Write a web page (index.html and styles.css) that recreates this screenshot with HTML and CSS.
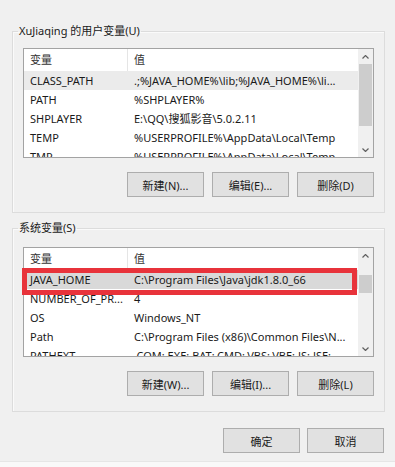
FILE: index.html
```html
<!DOCTYPE html>
<html>

<head>
    <meta charset="utf-8">
    <title>环境变量</title>
    <link rel="stylesheet" href="styles.css">
</head>

<body>
    <div class="dialog">
        <!-- 用户变量 -->
        <fieldset class="group">
            <legend>XuJiaqing 的用户变量(U)</legend>
            <div class="list">
                <div class="list-view">
                    <div class="row head">
                        <div class="cell name">变量</div>
                        <div class="cell">值</div>
                    </div>
                    <div class="row hover">
                        <div class="cell name">CLASS_PATH</div>
                        <div class="cell">.;%JAVA_HOME%\lib;%JAVA_HOME%\li...</div>
                    </div>
                    <div class="row">
                        <div class="cell name">PATH</div>
                        <div class="cell">%SHPLAYER%</div>
                    </div>
                    <div class="row">
                        <div class="cell name">SHPLAYER</div>
                        <div class="cell">E:\QQ\搜狐影音\5.0.2.11</div>
                    </div>
                    <div class="row">
                        <div class="cell name">TEMP</div>
                        <div class="cell">%USERPROFILE%\AppData\Local\Temp</div>
                    </div>
                    <div class="row">
                        <div class="cell name">TMP</div>
                        <div class="cell">%USERPROFILE%\AppData\Local\Temp</div>
                    </div>
                </div>
                <div class="scrollbar">
                    <div class="arrow">
                        <svg width="7" height="4" viewBox="0 0 7 4"><path d="M0.5 3.5 L3.5 0.5 L6.5 3.5" /></svg>
                    </div>
                    <div class="track">
                        <div class="thumb" style="margin-top: 0; height: 62px;"></div>
                    </div>
                    <div class="arrow">
                        <svg width="7" height="4" viewBox="0 0 7 4"><path d="M0.5 0.5 L3.5 3.5 L6.5 0.5" /></svg>
                    </div>
                </div>
            </div>
            <div class="actions">
                <button>新建(N)...</button>
                <button>编辑(E)...</button>
                <button>删除(D)</button>
            </div>
        </fieldset>

        <!-- 系统变量 -->
        <fieldset class="group second">
            <legend>系统变量(S)</legend>
            <div class="list">
                <div class="list-view">
                    <div class="row head">
                        <div class="cell name">变量</div>
                        <div class="cell">值</div>
                    </div>
                    <div class="row selected">
                        <div class="cell name">JAVA_HOME</div>
                        <div class="cell">C:\Program Files\Java\jdk1.8.0_66</div>
                    </div>
                    <div class="row">
                        <div class="cell name">NUMBER_OF_PR...</div>
                        <div class="cell">4</div>
                    </div>
                    <div class="row">
                        <div class="cell name">OS</div>
                        <div class="cell">Windows_NT</div>
                    </div>
                    <div class="row">
                        <div class="cell name">Path</div>
                        <div class="cell">C:\Program Files (x86)\Common Files\N...</div>
                    </div>
                    <div class="row">
                        <div class="cell name">PATHEXT</div>
                        <div class="cell">.COM;.EXE;.BAT;.CMD;.VBS;.VBE;.JS;.JSE;...</div>
                    </div>
                </div>
                <div class="scrollbar">
                    <div class="arrow">
                        <svg width="7" height="4" viewBox="0 0 7 4"><path d="M0.5 3.5 L3.5 0.5 L6.5 3.5" /></svg>
                    </div>
                    <div class="track">
                        <div class="thumb" style="margin-top: 12px; height: 18px;"></div>
                    </div>
                    <div class="arrow">
                        <svg width="7" height="4" viewBox="0 0 7 4"><path d="M0.5 0.5 L3.5 3.5 L6.5 0.5" /></svg>
                    </div>
                </div>
                <!-- 红色标注框 -->
                <div class="mark"></div>
            </div>
            <div class="actions">
                <button>新建(W)...</button>
                <button>编辑(I)...</button>
                <button>删除(L)</button>
            </div>
        </fieldset>

        <div class="footer">
            <button>确定</button>
            <button>取消</button>
        </div>
    </div>
    <div class="edge"></div>
</body>

</html>
```

FILE: styles.css
```css
html,
body {
    margin: 0;
    background: #f0f0f0;
    font-family: "Noto Sans", "Noto Sans CJK SC", sans-serif;
    font-size: 11px;
    color: #1a1a1a;
}

.dialog {
    padding: 23px 10px 8px 12px;
}

/* 分组框 */
.group {
    margin: 0;
    padding: 0 10px 15px;
    border: 1px solid #dcdcdc;
    box-shadow: inset 1px 1px 0 #fafafa;
}

.group legend {
    margin-left: -5px;
    padding: 0 1px;
    line-height: 16px;
    color: #1a1a1a;
}

.group.second {
    margin-top: 7px;
}

/* 列表 */
.list {
    position: relative;
    display: flex;
    height: 110px;
    margin-top: 9px;
    box-sizing: border-box;
    border: 1px solid #a3a3a3;
    background: #fff;
}

.second .list {
    margin-top: 11px;
}

.list-view {
    flex: 1;
    min-width: 0;
    overflow: hidden;
}

.row {
    display: grid;
    grid-template-columns: 104px 1fr;
    height: 19px;
    line-height: 19px;
}

.row.head {
    height: 22px;
    line-height: 22px;
    color: #333;
}

.row.head .name {
    border-right: 1px solid #e5e5e5;
}

.row.hover {
    background: #ebebeb;
}

.row.selected {
    background: #d9d9d9;
}

.cell {
    padding-left: 6px;
    white-space: nowrap;
    overflow: hidden;
}

/* 滚动条 */
.scrollbar {
    width: 15px;
    display: flex;
    flex-direction: column;
    background: #f0f0f0;
}

.arrow {
    height: 15px;
    display: flex;
    align-items: center;
    justify-content: center;
}

.arrow svg path {
    fill: none;
    stroke: #606060;
    stroke-width: 1.2;
}

.track {
    flex: 1;
}

.thumb {
    margin: 0 1px;
    background: #cdcdcd;
}

.mark {
    position: absolute;
    left: -2px;
    top: 20px;
    width: 335px;
    height: 27px;
    box-sizing: border-box;
    border: 5px solid #e8333b;
}

/* 按钮 */
button {
    width: 77px;
    height: 25px;
    padding: 0;
    border: 1px solid #adadad;
    background: #e1e1e1;
    font-family: inherit;
    font-size: 11px;
    color: #1a1a1a;
}

.actions {
    display: flex;
    justify-content: flex-end;
    gap: 8px;
    margin-top: 14px;
}

.footer {
    display: flex;
    justify-content: flex-end;
    gap: 7px;
    margin-top: 16px;
    margin-right: 1px;
}

.edge {
    height: 8px;
    border-top: 1px solid #e6e6e6;
    background: #f9f9f9;
}
```
